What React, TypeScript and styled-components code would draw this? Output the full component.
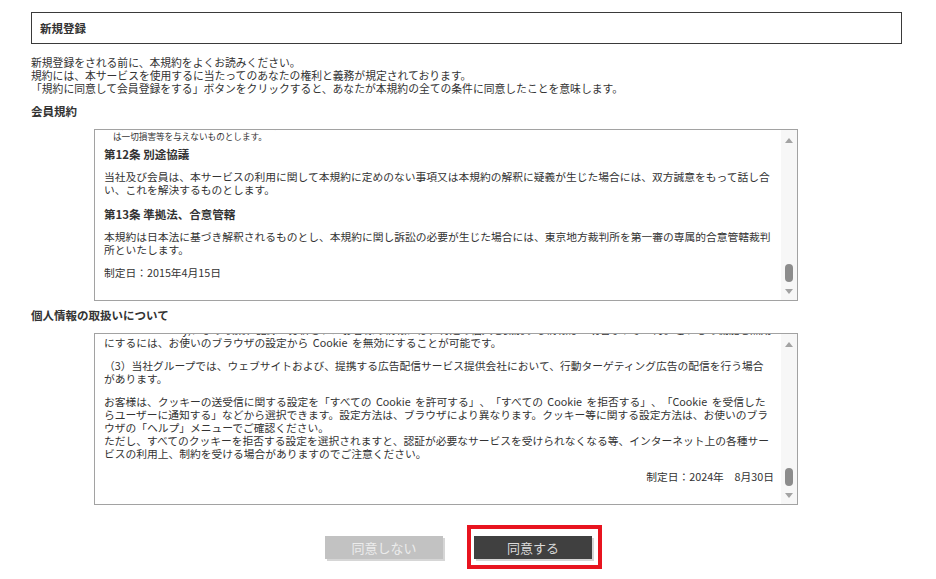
import React from "react";
import styled, { createGlobalStyle } from "styled-components";

const GlobalStyle = createGlobalStyle`
  body {
    margin: 0;
    background: #fff;
    color: #333;
    font-family: "Noto Sans CJK JP", "Noto Sans", sans-serif;
    text-spacing-trim: space-all;
  }
`;

const App = () => {
  return (
    <>
      <GlobalStyle />
      <Page>
        <TitleBar>新規登録</TitleBar>
        <Lead>
          新規登録をされる前に、本規約をよくお読みください。
          <br />
          規約には、本サービスを使用するに当たってのあなたの権利と義務が規定されております。
          <br />
          「規約に同意して会員登録をする」ボタンをクリックすると、あなたが本規約の全ての条件に同意したことを意味します。
        </Lead>

        <SectionTitle>会員規約</SectionTitle>
        <TermsBox>
          <Viewport>
            <Inner>
              <Article>第11条 免責</Article>
              <Para>
                当社は、本サービスの内容変更、中断、終了によって生じたいかなる損害についても、一切責任を負わないものとします。
              </Para>
              <Note>
                会員が本サービスの利用により第三者に損害を与えた場合、当社
                <br />
                は一切損害等を与えないものとします。
              </Note>
              <Article>第12条 別途協議</Article>
              <Para>
                当社及び会員は、本サービスの利用に関して本規約に定めのない事項又は本規約の解釈に疑義が生じた場合には、双方誠意をもって話し合い、これを解決するものとします。
              </Para>
              <Article>第13条 準拠法、合意管轄</Article>
              <Para>
                本規約は日本法に基づき解釈されるものとし、本規約に関し訴訟の必要が生じた場合には、東京地方裁判所を第一審の専属的合意管轄裁判所といたします。
              </Para>
              <Para>制定日：2015年4月15日</Para>
            </Inner>
          </Viewport>
          <FakeScrollbar />
        </TermsBox>

        <SectionTitle>個人情報の取扱いについて</SectionTitle>
        <TermsBox>
          <Viewport>
            <Inner>
              <Para>
                （2）当社グループでは、サービスの利用状況を把握するため、アクセス解析ツールを利用しています。
                <br />
                <NoWrap>
                  Microsoft Clarity)により収集、記録・分析されたお客様の情報には、特定の個人を識別する情報は一切含まれません。これらの機能を無効
                </NoWrap>
                <br />
                にするには、お使いのブラウザの設定から Cookie を無効にすることが可能です。
              </Para>
              <Para>
                （3）当社グループでは、ウェブサイトおよび、提携する広告配信サービス提供会社において、行動ターゲティング広告の配信を行う場合があります。
              </Para>
              <Para>
                お客様は、クッキーの送受信に関する設定を「すべての Cookie を許可する」、「すべての Cookie を拒否する」、「Cookie を受信したらユーザーに通知する」などから選択できます。設定方法は、ブラウザにより異なります。クッキー等に関する設定方法は、お使いのブラウザの「ヘルプ」メニューでご確認ください。
                <br />
                ただし、すべてのクッキーを拒否する設定を選択されますと、認証が必要なサービスを受けられなくなる等、インターネット上の各種サービスの利用上、制約を受ける場合がありますのでご注意ください。
              </Para>
              <Para align="right">制定日：2024年　8月30日</Para>
            </Inner>
          </Viewport>
          <FakeScrollbar />
        </TermsBox>

        <Actions>
          <ActionButton variant="decline" type="button">
            同意しない
          </ActionButton>
          <Highlight>
            <ActionButton variant="agree" type="button">
              同意する
            </ActionButton>
          </Highlight>
        </Actions>
      </Page>
    </>
  );
};

const FakeScrollbar = () => (
  <Track>
    <Arrow direction="up" />
    <Thumb />
    <Arrow direction="down" />
  </Track>
);

export default App;

const Page = styled.div`
  width: 871px;
  padding: 12px 0 0 31px;
`;

const TitleBar = styled.div`
  box-sizing: border-box;
  height: 32px;
  border: 1px solid #3a3a3a;
  padding-left: 8px;
  line-height: 30px;
  font-size: 11.5px;
  font-weight: 700;
  color: #333;
`;

const Lead = styled.p`
  margin: 12px 0 0;
  font-size: 10.8px;
  line-height: 13px;
`;

const SectionTitle = styled.h2`
  margin: 8px 0 10px;
  font-size: 11.5px;
  line-height: 16px;
  font-weight: 700;
  color: #333;
`;

const TermsBox = styled.div`
  box-sizing: border-box;
  display: flex;
  width: 704px;
  height: 172px;
  margin-left: 63px;
  border: 1px solid #a2a2a2;
  background: #fff;
  & + ${SectionTitle} {
    margin-top: 6px;
  }
`;

const Viewport = styled.div`
  flex: 1;
  min-width: 0;
  display: flex;
  flex-direction: column;
  justify-content: flex-end;
  overflow: hidden;
  padding: 0 7px 0 9px;
`;

const Inner = styled.div`
  padding-bottom: 11px;
`;

const Article = styled.h3`
  margin: 0 0 8px;
  font-size: 11.5px;
  line-height: 16px;
  font-weight: 700;
  color: #333;
`;

const Para = styled.p<{ align?: "left" | "right" }>`
  margin: 0 0 10px;
  font-size: 10.75px;
  line-height: 13px;
  word-spacing: 2px;
  text-align: ${({ align }) => align ?? "left"};
`;

const Note = styled.p`
  margin: 0 0 4px;
  padding-left: 9px;
  font-size: 8.6px;
  line-height: 11px;
`;

const NoWrap = styled.span`
  white-space: nowrap;
`;

const Track = styled.div`
  box-sizing: border-box;
  width: 16px;
  flex-shrink: 0;
  display: flex;
  flex-direction: column;
  align-items: center;
  padding: 8px 0 6px;
  background: #f7f7f7;
`;

const Arrow = styled.span<{ direction: "up" | "down" }>`
  width: 0;
  height: 0;
  border-left: 4px solid transparent;
  border-right: 4px solid transparent;
  ${({ direction }) =>
    direction === "up"
      ? "border-bottom: 5px solid #a3a3a3;"
      : "border-top: 5px solid #a3a3a3;"}
`;

const Thumb = styled.span`
  width: 8px;
  height: 18px;
  margin: auto 0 7px;
  border-radius: 4px;
  background: #8c8c8c;
`;

const Actions = styled.div`
  display: flex;
  justify-content: center;
  align-items: center;
  gap: 24px;
  margin-top: 20px;
  padding-right: 6px;
`;

const Highlight = styled.div`
  border: 4px solid #e8141f;
  padding: 7px 6px 6px 3px;
`;

const ActionButton = styled.button<{ variant: "agree" | "decline" }>`
  display: block;
  width: 118px;
  height: 23px;
  padding: 0;
  border: none;
  font-family: inherit;
  font-size: 13px;
  line-height: 23px;
  cursor: pointer;
  box-shadow: 2px 2px 0 #d6d6d6;
  background: ${({ variant }) => (variant === "agree" ? "#404040" : "#c2c2c2")};
  color: ${({ variant }) => (variant === "agree" ? "#dadada" : "#ececec")};
`;
